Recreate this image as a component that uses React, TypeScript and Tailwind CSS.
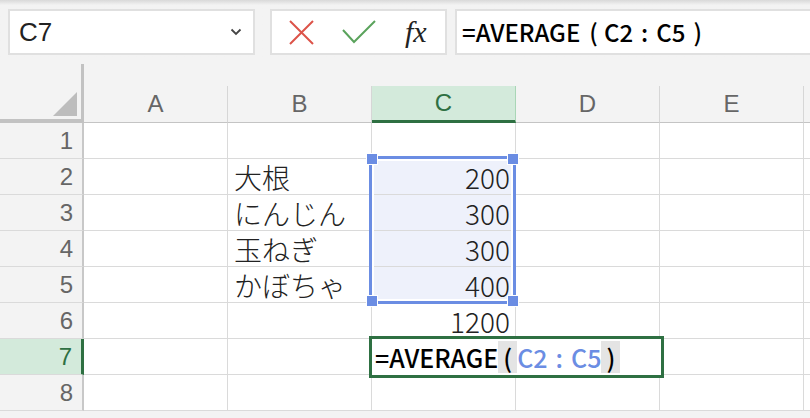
import clsx from "clsx";

const cols = ["A", "B", "C", "D", "E"];

const rows = [
    {n: 1, b: "", c: ""},
    {n: 2, b: "大根", c: "200"},
    {n: 3, b: "にんじん", c: "300"},
    {n: 4, b: "玉ねぎ", c: "300"},
    {n: 5, b: "かぼちゃ", c: "400"},
    {n: 6, b: "", c: "1200"},
    {n: 7, b: "", c: ""},
    {n: 8, b: "", c: ""},
];

const ui = "font-['Liberation_Sans','Noto_Sans',sans-serif]";
const cellFont = "font-['Noto_Sans_CJK_JP','Noto_Sans',sans-serif] font-extralight";
const formulaFont = "font-['Noto_Sans_CJK_JP','Noto_Sans',sans-serif] font-medium";

function Formula({inCell}: { inCell?: boolean }) {
    return (
        <span className={clsx("flex items-center whitespace-nowrap text-black leading-[32px]", formulaFont, inCell ? "text-[25px]" : "text-[24px]")}>
            =AVERAGE
            <span className={clsx(inCell ? "px-[5px] bg-[#e4e4e4]" : "pl-[9px] pr-[6px]")}>(</span>
            <span className={clsx(inCell && "text-[#6b8de3]")}>C2</span>
            <span className={clsx("px-[8px]", inCell && "text-[#6b8de3]")}>:</span>
            <span className={clsx(inCell && "text-[#6b8de3]")}>C5</span>
            <span className={clsx(inCell ? "px-[5px] bg-[#e4e4e4]" : "pl-[8px]")}>)</span>
        </span>
    );
}

function Handle({pos}: { pos: string }) {
    return <div className={clsx("absolute w-[12px] h-[12px] bg-[#6b8de3] border border-white", pos)}/>;
}

export default function App() {
    return (
        <div className={clsx("w-[810px] h-[418px] overflow-hidden bg-[#f3f3f3] relative", ui)}>
            {/* toolbar */}
            <div className="h-[64px] bg-gradient-to-b from-[#d9d9d9] via-[#f3f3f3] via-[8%] to-[#f3f3f3] flex items-start pt-[9px] pl-[8px]">
                <div className="w-[247px] h-[46px] bg-white border-2 border-[#e0e0e0] flex items-center justify-between pl-[9px] pr-[11px]">
                    <span className="text-[26px] text-[#222]">C7</span>
                    <svg width="12" height="8" viewBox="0 0 12 8">
                        <path d="M1.5 1.5 L6 6 L10.5 1.5" fill="none" stroke="#444" strokeWidth="1.8"/>
                    </svg>
                </div>
                <div className="ml-[15px] w-[177px] h-[46px] bg-white border-2 border-[#e0e0e0] flex items-center">
                    <svg className="ml-[17px]" width="25" height="25" viewBox="0 0 25 25">
                        <path d="M1 1 L24 24 M24 1 L1 24" stroke="#dc5349" strokeWidth="2"/>
                    </svg>
                    <svg className="ml-[28px]" width="34" height="24" viewBox="0 0 34 24">
                        <path d="M1 10 L12 22 L33 1" fill="none" stroke="#5aa35c" strokeWidth="2"/>
                    </svg>
                    <span className="ml-[29px] font-['Liberation_Serif',serif] italic text-[30px] text-[#222] leading-none">fx</span>
                </div>
                <div className="ml-[8px] flex-1 h-[46px] bg-white border-2 border-r-0 border-[#e0e0e0] flex items-center pl-[5px]">
                    <Formula/>
                </div>
            </div>

            {/* column headers */}
            <div className="flex h-[59px]">
                <div className="w-[84px] shrink-0 border-r-[3px] border-b-4 border-[#c2c2c2] flex items-end justify-end pr-[4px] pb-[3px]">
                    <svg width="24" height="24" viewBox="0 0 24 24">
                        <polygon points="24,0 24,24 0,24" fill="#bdbdbd"/>
                    </svg>
                </div>
                {cols.map((c) => (
                    <div key={c} className="w-[144px] shrink-0 flex flex-col justify-end">
                        <div
                            className={clsx(
                                "h-[37px] flex items-center justify-center text-[24px] border-r",
                                c === "C"
                                    ? "bg-[#d3eadb] text-[#2e7042] border-r-[#a9d6b6] border-b-[3px] border-b-[#2e7042]"
                                    : "text-[#666] border-r-[#d6d6d6] border-b border-b-[#c4c4c4]"
                            )}
                        >
                            {c}
                        </div>
                    </div>
                ))}
                <div className="flex-1 flex flex-col justify-end">
                    <div className="h-[37px] border-b border-[#c4c4c4]"/>
                </div>
            </div>

            {/* rows */}
            {rows.map((r) => {
                const active = r.n === 7;
                const selected = r.n >= 2 && r.n <= 5;
                return (
                    <div key={r.n} className={clsx("flex h-[36px] leading-[32px]", cellFont)}>
                        <div
                            className={clsx(
                                "w-[84px] shrink-0 border-b border-b-[#dadada] flex items-center justify-end pr-[9px] text-[24px] font-normal",
                                ui,
                                active
                                    ? "bg-[#d3eadb] text-[#2e7042] border-r-[3px] border-r-[#2e7042]"
                                    : "bg-[#f3f3f3] text-[#666] border-r-2 border-r-[#c8c8c8]"
                            )}
                        >
                            {r.n}
                        </div>
                        <div className="w-[144px] shrink-0 bg-white border-r border-b border-[#dadada]"/>
                        <div className="w-[144px] shrink-0 bg-white border-r border-b border-[#dadada] flex items-center pl-[6px] text-[28px] text-[#222] whitespace-nowrap">
                            {r.b}
                        </div>
                        <div
                            className={clsx(
                                "w-[144px] shrink-0 border-r border-b border-[#dadada] flex items-center justify-end pr-[5px] text-[28px] text-[#222] relative",
                                selected ? "bg-[#eef1fb]" : "bg-white"
                            )}
                        >
                            {r.c}
                            {r.n === 2 && (
                                <div className="absolute z-10 -left-[3px] -top-[3px] w-[147px] h-[148px] border-[3px] border-[#6b8de3] shadow-[inset_0_0_0_2px_#ffffff]">
                                    <Handle pos="-left-[6px] -top-[6px]"/>
                                    <Handle pos="-right-[6px] -top-[6px]"/>
                                    <Handle pos="-left-[6px] -bottom-[6px]"/>
                                    <Handle pos="-right-[6px] -bottom-[6px]"/>
                                </div>
                            )}
                            {active && (
                                <div className="absolute z-10 -left-[3px] -top-[3px] w-[295px] h-[42px] bg-white border-[3px] border-[#2e7042] flex items-center pl-[3px]">
                                    <Formula inCell/>
                                </div>
                            )}
                        </div>
                        <div className="w-[144px] shrink-0 bg-white border-r border-b border-[#dadada]"/>
                        <div className="w-[144px] shrink-0 bg-white border-r border-b border-[#dadada]"/>
                        <div className="flex-1 bg-white border-b border-[#dadada]"/>
                    </div>
                );
            })}
        </div>
    );
}
